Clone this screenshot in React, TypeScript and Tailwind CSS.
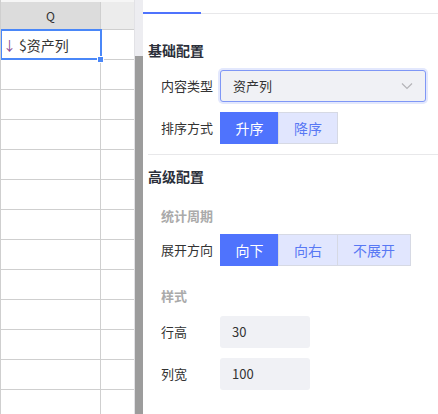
import React from "react";

const rows = Array.from({ length: 13 });

function SegBtn({ label, active, w }: { label: string; active?: boolean; w: string }) {
  return (
    <div
      className={
        "h-[32px] flex items-center justify-center text-[14px] leading-none border " +
        w +
        " " +
        (active
          ? "bg-[#4f73fd] border-[#4f73fd] text-white"
          : "bg-[#e1e6fe] border-[#d6d9e4] text-[#5878f4] -ml-px")
      }
    >
      {label}
    </div>
  );
}

export default function App() {
  return (
    <div className="w-[438px] h-[414px] overflow-hidden bg-white flex font-['Noto_Sans_CJK_SC',sans-serif] text-[#333]">
      {/* Left spreadsheet */}
      <div className="relative w-[134px] h-full overflow-hidden flex flex-col border-l border-[#cfcfcf] shrink-0">
        <div className="h-[30px] shrink-0 flex border-b border-[#cfcfcf] pt-[2px] bg-[#f6f6f6]">
          <div className="w-[100px] bg-[#dcdcdc] border-r border-[#cfcfcf] flex items-center justify-center text-[12px] text-[#333]">
            Q
          </div>
          <div className="flex-1 bg-[#ececec]" />
        </div>
        {rows.map((_, i) => (
          <div key={i} className="h-[30px] shrink-0 flex border-b border-[#cfcfcf]">
            <div className="w-[100px] border-r border-[#cfcfcf]" />
            <div className="flex-1" />
          </div>
        ))}
        <div className="absolute left-[-1px] top-[29px] w-[102px] h-[31px] border-2 border-[#4a87f8] flex items-center text-[14px] leading-none">
          <span className="ml-[1px] text-[#8a4790] text-[13px]">↓</span>
          <span className="ml-[3px] text-[#333]">$资产列</span>
        </div>
        <div className="absolute left-[96px] top-[56px] w-[7px] h-[7px] bg-[#4a87f8] border border-white" />
      </div>
      {/* Scrollbar */}
      <div className="w-[9px] h-full flex flex-col shrink-0 bg-[#ededf1] border-l border-[#e2e2e6]">
        <div className="h-[56px]" />
        <div className="flex-1 bg-[#9c9c9c]" />
      </div>

      {/* Right panel */}
      <div className="flex-1 flex flex-col">
        <div className="h-[14px] flex items-end">
          <div className="w-[58px] h-[2px] bg-[#4f73fd]" />
          <div className="flex-1 h-px bg-[#e8e8ea]" />
        </div>

        <div className="pl-[5px]">
          <div className="mt-[22px] h-[28px] flex items-center text-[14px] font-bold text-[#2b2f3a]">
            基础配置
          </div>

          <div className="mt-[6px] flex items-center pl-[13px]">
            <div className="w-[59px] text-[13px] text-[#333]">内容类型</div>
            <div className="w-[206px] h-[32px] rounded-[3px] bg-[#f0f1f5] border border-[#7f97f6] ring-2 ring-[#e3e8fd] flex items-center justify-between pl-[12px] pr-[12px]">
              <span className="text-[13px] text-[#333]">资产列</span>
              <svg width="12" height="8" viewBox="0 0 12 8">
                <polyline points="1,1.5 6,6.5 11,1.5" fill="none" stroke="#b4b4b8" strokeWidth="1.2" />
              </svg>
            </div>
          </div>

          <div className="mt-[10px] flex items-center pl-[13px]">
            <div className="w-[59px] text-[13px] text-[#333]">排序方式</div>
            <div className="flex">
              <SegBtn label="升序" active w="w-[59px]" />
              <SegBtn label="降序" w="w-[60px]" />
            </div>
          </div>

          <div className="mt-[10px] h-px bg-[#e8e8ea]" />

          <div className="h-[42px] flex items-center text-[14px] font-bold text-[#2b2f3a]">
            高级配置
          </div>

          <div className="h-[37px] flex items-center pl-[13px] text-[13px] font-bold text-[#aaaaaa]">
            统计周期
          </div>

          <div className="flex items-center pl-[13px]">
            <div className="w-[59px] text-[13px] text-[#333]">展开方向</div>
            <div className="flex">
              <SegBtn label="向下" active w="w-[59px]" />
              <SegBtn label="向右" w="w-[60px]" />
              <SegBtn label="不展开" w="w-[74px]" />
            </div>
          </div>

          <div className="h-[50px] pt-[20px] pl-[13px] text-[13px] leading-[20px] font-bold text-[#aaaaaa]">
            样式
          </div>

          <div className="flex items-center pl-[13px]">
            <div className="w-[59px] text-[13px] text-[#333]">行高</div>
            <div className="w-[90px] h-[32px] rounded-[3px] bg-[#f0f1f5] flex items-center pl-[12px] text-[13px] text-[#333]">
              30
            </div>
          </div>

          <div className="mt-[10px] flex items-center pl-[13px]">
            <div className="w-[59px] text-[13px] text-[#333]">列宽</div>
            <div className="w-[90px] h-[32px] rounded-[3px] bg-[#f0f1f5] flex items-center pl-[12px] text-[13px] text-[#333]">
              100
            </div>
          </div>
        </div>
      </div>
    </div>
  );
}
